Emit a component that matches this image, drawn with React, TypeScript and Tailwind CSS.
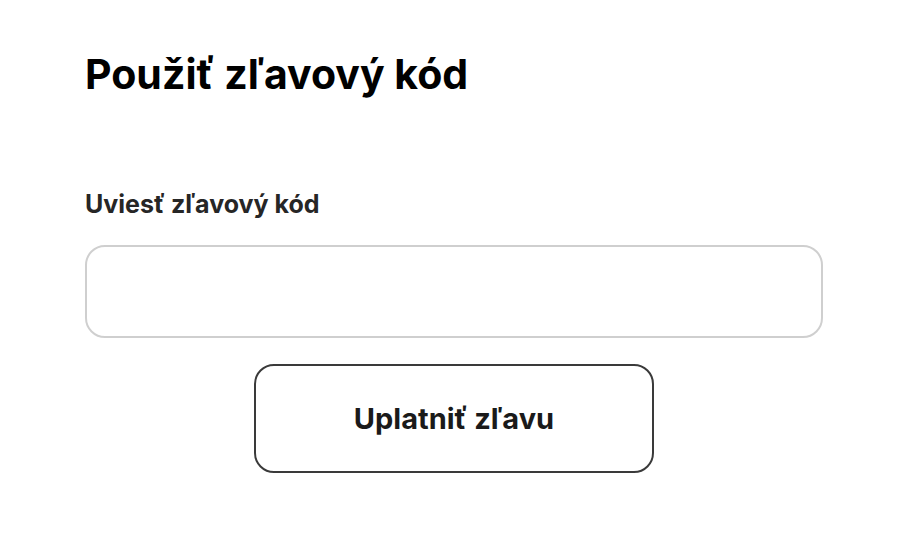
import React from "react";

const App = () => {
  return (
    <div className="w-[900px] h-[554px] bg-white" style={{ fontFamily: "Inter, Roboto, 'Noto Sans', sans-serif" }}>
      <div className="pl-[85px] pt-[49px] w-[823px]">
        <h1 className="text-[41px] leading-[50px] font-bold text-black">Použiť zľavový kód</h1>
        <label className="block mt-[89px] text-[25px] leading-[32px] font-bold text-[#262626]">
          Uviesť zľavový kód
        </label>
        <input
          type="text"
          className="block mt-[25px] w-[738px] h-[93px] rounded-[20px] border-2 border-[#cfcfcf] bg-white outline-none px-5 text-[22px]"
        />
        <div className="flex justify-center mt-[26px]">
          <button className="w-[400px] h-[109px] rounded-[20px] border-2 border-[#3a3a3a] bg-white text-[29px] font-bold text-[#1a1a1a]">
            Uplatniť zľavu
          </button>
        </div>
      </div>
    </div>
  );
};

export default App;
